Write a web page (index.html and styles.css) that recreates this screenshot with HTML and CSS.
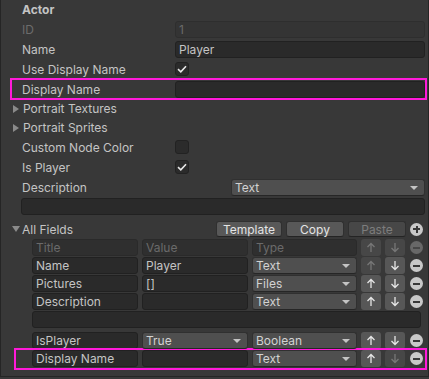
FILE: index.html
```html
<!DOCTYPE html>
<html lang="en">

<head>
    <meta charset="UTF-8">
    <meta name="viewport" content="width=device-width, initial-scale=1.0">
    <title>Actor</title>
    <link rel="stylesheet" href="styles.css">
</head>

<body>
    <div class="inspector">

        <div class="title">Actor</div>

        <div class="prop">
            <span class="label off">ID</span>
            <div class="field disabled">1</div>
        </div>

        <div class="prop">
            <span class="label">Name</span>
            <div class="field">Player</div>
        </div>

        <div class="prop">
            <span class="label">Use Display Name</span>
            <div class="check">
                <svg width="10" height="8" viewBox="0 0 10 8"><polyline points="1,4.2 3.8,6.8 9,1.2" fill="none" stroke="#e8e8e8" stroke-width="1.6"/></svg>
            </div>
        </div>

        <!-- 강조 표시된 행 -->
        <div class="prop mark">
            <span class="label">Display Name</span>
            <div class="field"></div>
        </div>

        <div class="fold">
            <span class="tri-right"></span>
            <span>Portrait Textures</span>
        </div>

        <div class="fold">
            <span class="tri-right"></span>
            <span>Portrait Sprites</span>
        </div>

        <div class="prop">
            <span class="label">Custom Node Color</span>
            <div class="check"></div>
        </div>

        <div class="prop">
            <span class="label">Is Player</span>
            <div class="check">
                <svg width="10" height="8" viewBox="0 0 10 8"><polyline points="1,4.2 3.8,6.8 9,1.2" fill="none" stroke="#e8e8e8" stroke-width="1.6"/></svg>
            </div>
        </div>

        <div class="prop">
            <span class="label wide">Description</span>
            <div class="popup">Text<span class="caret"></span></div>
        </div>

        <div class="textarea"></div>

        <!-- All Fields -->
        <div class="fields-head">
            <span class="tri-down"></span>
            <span class="fields-title">All Fields</span>
            <button class="btn">Template</button>
            <button class="btn">Copy</button>
            <button class="btn disabled">Paste</button>
            <span class="circle plus"></span>
        </div>

        <div class="list">
            <div class="lrow">
                <div class="cell head">Title</div>
                <div class="cell head">Value</div>
                <div class="cell type head">Type</div>
                <div class="arrow off"><svg width="10" height="11"><path d="M5 1.5V10M1.5 5L5 1.5L8.5 5"/></svg></div>
                <div class="arrow off"><svg width="10" height="11"><path d="M5 1V9.5M1.5 6L5 9.5L8.5 6"/></svg></div>
                <span class="circle minus off"></span>
            </div>

            <div class="lrow">
                <div class="cell">Name</div>
                <div class="cell">Player</div>
                <div class="cell type popup">Text<span class="caret"></span></div>
                <div class="arrow off"><svg width="10" height="11"><path d="M5 1.5V10M1.5 5L5 1.5L8.5 5"/></svg></div>
                <div class="arrow"><svg width="10" height="11"><path d="M5 1V9.5M1.5 6L5 9.5L8.5 6"/></svg></div>
                <span class="circle minus"></span>
            </div>

            <div class="lrow">
                <div class="cell">Pictures</div>
                <div class="cell">[]</div>
                <div class="cell type popup">Files<span class="caret"></span></div>
                <div class="arrow"><svg width="10" height="11"><path d="M5 1.5V10M1.5 5L5 1.5L8.5 5"/></svg></div>
                <div class="arrow"><svg width="10" height="11"><path d="M5 1V9.5M1.5 6L5 9.5L8.5 6"/></svg></div>
                <span class="circle minus"></span>
            </div>

            <div class="lrow">
                <div class="cell">Description</div>
                <div class="cell"></div>
                <div class="cell type popup">Text<span class="caret"></span></div>
                <div class="arrow"><svg width="10" height="11"><path d="M5 1.5V10M1.5 5L5 1.5L8.5 5"/></svg></div>
                <div class="arrow"><svg width="10" height="11"><path d="M5 1V9.5M1.5 6L5 9.5L8.5 6"/></svg></div>
                <span class="circle minus"></span>
            </div>

            <div class="lrow area-row">
                <div class="cell area"></div>
            </div>

            <div class="lrow">
                <div class="cell">IsPlayer</div>
                <div class="cell popup">True<span class="caret"></span></div>
                <div class="cell type popup">Boolean<span class="caret"></span></div>
                <div class="arrow"><svg width="10" height="11"><path d="M5 1.5V10M1.5 5L5 1.5L8.5 5"/></svg></div>
                <div class="arrow"><svg width="10" height="11"><path d="M5 1V9.5M1.5 6L5 9.5L8.5 6"/></svg></div>
                <span class="circle minus"></span>
            </div>

            <div class="lrow mark">
                <div class="cell">Display Name</div>
                <div class="cell"></div>
                <div class="cell type popup">Text<span class="caret"></span></div>
                <div class="arrow"><svg width="10" height="11"><path d="M5 1.5V10M1.5 5L5 1.5L8.5 5"/></svg></div>
                <div class="arrow off"><svg width="10" height="11"><path d="M5 1V9.5M1.5 6L5 9.5L8.5 6"/></svg></div>
                <span class="circle minus"></span>
            </div>
        </div>

    </div>
</body>

</html>
```

FILE: styles.css
```css
body {
    margin: 0;
    background: #383838;
    font-family: Inter, "Noto Sans", sans-serif;
    font-size: 12px;
    color: #c4c4c4;
}

.inspector {
    height: 376px;
    border-left: 1px solid #252525;
    border-right: 1px solid #252525;
    border-bottom: 1px solid #252525;
    padding: 0 3px 0 11px;
}

.title {
    height: 20px;
    line-height: 20px;
    padding-left: 10px;
    font-weight: bold;
}

.prop {
    display: flex;
    align-items: center;
    height: 18px;
    margin-bottom: 2px;
}

.prop .label {
    flex: none;
    width: 153px;
    padding-left: 10px;
}

.prop .label.wide {
    width: 209px;
}

.label.off {
    color: #6c6c6c;
}

.mark {
    outline: 2px solid #ff1ad9;
}

.field {
    flex: 1;
    height: 17px;
    box-sizing: border-box;
    background: #2a2a2a;
    border: 1px solid #212121;
    border-radius: 3px;
    padding: 0 3px;
    line-height: 15px;
}

.field.disabled {
    background: #343434;
    border-color: #2e2e2e;
    color: #6a6a6a;
}

.check {
    width: 14px;
    height: 14px;
    box-sizing: border-box;
    background: #2b2b2b;
    border: 1px solid #222;
    border-radius: 3px;
    display: flex;
    align-items: center;
    justify-content: center;
}

.fold {
    display: flex;
    align-items: center;
    height: 17px;
    margin-bottom: 2px;
}

.tri-right {
    width: 0;
    height: 0;
    border-top: 4px solid transparent;
    border-bottom: 4px solid transparent;
    border-left: 6px solid #8a8a8a;
    margin: 0 4px 0 1px;
}

.tri-down {
    width: 0;
    height: 0;
    border-left: 4px solid transparent;
    border-right: 4px solid transparent;
    border-top: 6px solid #8a8a8a;
    margin: 0 2px 0 0;
}

.popup {
    flex: 1;
    position: relative;
    height: 17px;
    box-sizing: border-box;
    background: #4f4f4f;
    border: 1px solid #303030;
    border-bottom-color: #262626;
    border-radius: 3px;
    padding: 0 3px;
    line-height: 15px;
    color: #d2d2d2;
}

.caret {
    position: absolute;
    right: 6px;
    top: 6px;
    width: 0;
    height: 0;
    border-left: 4px solid transparent;
    border-right: 4px solid transparent;
    border-top: 4px solid #c4c4c4;
}

.textarea {
    height: 17px;
    margin: 0 0 5px 9px;
    box-sizing: border-box;
    background: #2a2a2a;
    border: 1px solid #212121;
    border-radius: 3px;
}

/* All Fields 영역 */
.fields-head {
    display: flex;
    align-items: center;
    height: 18px;
    margin-bottom: 1px;
}

.fields-title {
    flex: 1;
}

.btn {
    height: 16px;
    box-sizing: border-box;
    margin: 0 4px 0 0;
    padding: 0;
    background: #585858;
    border: 1px solid #303030;
    border-bottom-color: #242424;
    border-radius: 3px;
    font: inherit;
    line-height: 13px;
    color: #e4e4e4;
    width: 66px;
}

.btn + .btn {
    width: 58px;
}

.btn.disabled {
    background: #474747;
    color: #7d7d7d;
}

.circle {
    flex: none;
    position: relative;
    width: 13px;
    height: 13px;
    border-radius: 50%;
    background: #c8c8c8;
    margin-right: 2px;
}

.circle::before {
    content: "";
    position: absolute;
    left: 3px;
    top: 5.5px;
    width: 7px;
    height: 2px;
    background: #383838;
}

.circle.plus::after {
    content: "";
    position: absolute;
    left: 5.5px;
    top: 3px;
    width: 2px;
    height: 7px;
    background: #383838;
}

.circle.off {
    background: #686868;
}

.circle.off::before {
    background: #474747;
}

.list {
    padding-left: 4px;
}

.lrow {
    display: flex;
    height: 18px;
    padding-left: 16px;
}

.cell {
    flex: none;
    width: 106px;
    height: 17px;
    box-sizing: border-box;
    margin-right: 4px;
    background: #2a2a2a;
    border: 1px solid #212121;
    border-radius: 3px;
    padding: 0 3px;
    line-height: 15px;
}

.cell.popup {
    background: #4f4f4f;
    border-color: #303030;
    border-bottom-color: #262626;
}

.cell.type {
    width: 105px;
}

.cell.head {
    background: #2f2f2f;
    border-color: #2a2a2a;
    color: #6a6a6a;
}

.area-row {
    margin-bottom: 3px;
}

.cell.area {
    width: 389px;
}

.arrow {
    flex: none;
    width: 20px;
    height: 17px;
    margin-right: 4px;
    border-radius: 3px;
    background: #575757;
    display: flex;
    align-items: center;
    justify-content: center;
}

.arrow path {
    fill: none;
    stroke: #e6e6e6;
    stroke-width: 1.3;
}

.arrow.off {
    background: #474747;
}

.arrow.off path {
    stroke: #777;
}

.lrow .circle {
    margin: 2px 0 0 1px;
}
```
